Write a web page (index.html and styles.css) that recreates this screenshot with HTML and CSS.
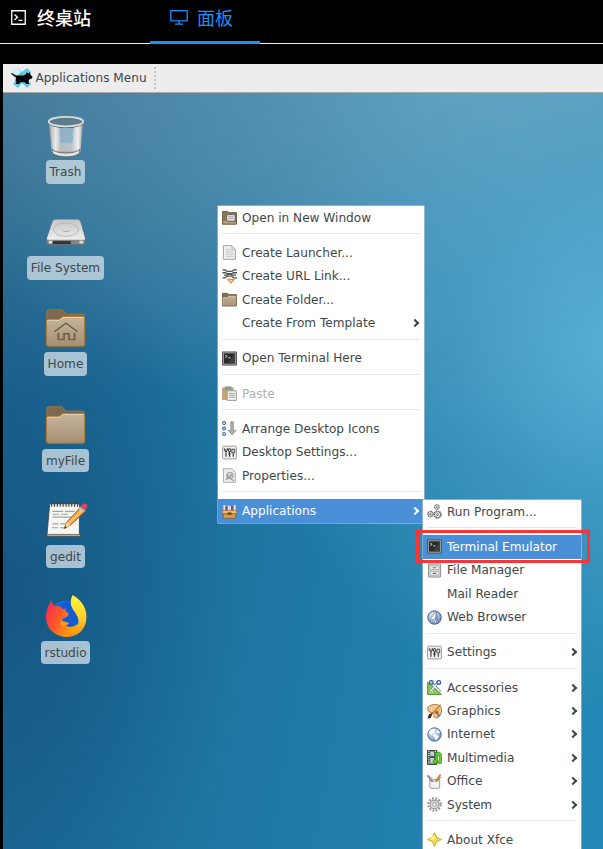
FILE: index.html
```html
<!DOCTYPE html>
<html lang="zh">
<head>
<meta charset="utf-8">
<title>面板</title>
<link rel="stylesheet" href="styles.css">
</head>
<body>
<svg class="defs" aria-hidden="true">
  <defs>
    <linearGradient id="tan" x1="0" y1="0" x2="0" y2="1"><stop offset="0" stop-color="#c5b59d"/><stop offset="1" stop-color="#a58f73"/></linearGradient>
    <linearGradient id="steel" x1="0" y1="0" x2="1" y2="0"><stop offset="0" stop-color="#8d9090"/><stop offset=".2" stop-color="#e4e6e6"/><stop offset=".35" stop-color="#9eaaae"/><stop offset=".65" stop-color="#a5b0b4"/><stop offset=".85" stop-color="#eeeeee"/><stop offset="1" stop-color="#85898a"/></linearGradient>
    <linearGradient id="drive" x1="0" y1="0" x2="0" y2="1"><stop offset="0" stop-color="#c4c4c4"/><stop offset="1" stop-color="#eeeeee"/></linearGradient>
    <linearGradient id="fire" x1="0" y1="0" x2="1" y2=".5"><stop offset="0" stop-color="#f4205c"/><stop offset=".45" stop-color="#ff552c"/><stop offset="1" stop-color="#ffb000"/></linearGradient>
    <linearGradient id="flame" x1="0" y1="0" x2="0" y2="1"><stop offset="0" stop-color="#fff23f"/><stop offset=".5" stop-color="#ffd52c"/><stop offset="1" stop-color="#ff8a12"/></linearGradient>
    <radialGradient id="orb" cx=".4" cy=".35" r=".7"><stop offset="0" stop-color="#f0f5fb"/><stop offset=".6" stop-color="#9fb5d4"/><stop offset="1" stop-color="#5878ab"/></radialGradient>
    <pattern id="mesh" width="2.4" height="2.4" patternUnits="userSpaceOnUse"><path d="M0 0h1.2v1.2H0zM1.2 1.2h1.2v1.2H1.2z" fill="#f5f8f8" opacity=".5"/></pattern>
    <pattern id="dither" width="2" height="2" patternUnits="userSpaceOnUse"><path d="M0 0h1v1H0zM1 1h1v1H1z" fill="#fff" opacity=".6"/></pattern>

    <symbol id="folder" viewBox="0 0 16 16"><path d="M.5 14V1.5h5.7l1.2 1.3h8.1V14z" fill="#86735a" stroke="#6d5a3d"/><path d="M.5 15V5.2h5L6.8 3.7h8.7V15z" fill="url(#tan)" stroke="#86683f" stroke-width=".9"/><path d="M1.3 14V6H6l1.3-1.5h7.3" fill="none" stroke="#dccdb5" stroke-width=".6"/></symbol>
    <symbol id="folder-open" viewBox="0 0 16 16"><path d="M.5 15V1.5h5.7l1.2 1.3h8.1V15z" fill="#8b7859" stroke="#6d5a3d"/><path d="M5 5h9v7H5z" fill="#f3f3f0" stroke="#5b5549" stroke-width=".9"/><path d="M6.5 7.2h6M6.5 9.2h6" stroke="#888" stroke-width=".9"/><path d="M.6 15V10.8H5l1 1.2h9.4v3z" fill="#b4a184" stroke="#6d5a3d" stroke-width=".8"/></symbol>
    <symbol id="page" viewBox="0 0 16 16"><path d="M1.5.7h9l3.8 4v10.6H1.5z" fill="#f3f3f2" stroke="#9b9b99"/><path d="M10.4 1v4h4" fill="#ddd" stroke="#aaa" stroke-width=".7"/><path d="M3.5 4.5h5.5M3.5 6.5h9M3.5 8.5h9M3.5 10.5h9M3.5 12.5h9" stroke="#bcbcba" stroke-width=".8"/></symbol>
    <symbol id="link" viewBox="0 0 16 16"><path d="M.5 1h3l2 1.6h5l2-1.6H16M.5 4H4l1.5 1h5L12 4h4M.5 9.5h3l2-2h5l2 2H16M2 6.6h3l1-1h4l1 1h4" fill="none" stroke="#50524f" stroke-width="1.4"/><path d="M4.6 10.4h9.8l-4.9 5.4z" fill="#f2883d"/><path d="M7.6 11.8h3.8l-1.9 2.1z" fill="#ffe1c9"/></symbol>
    <symbol id="terminal" viewBox="0 0 16 16"><path d="M.5 1h15v14H.5z" fill="#a9aba6" stroke="#4d4f4c"/><path d="M2 2.5h12v11H2z" fill="#272b29"/><path d="m3.5 4.5 2 1.2-2 1.2M6.5 7.3H9" fill="none" stroke="#eee" stroke-width=".9"/><path d="M14 2.5v11H6z" fill="#505552" opacity=".55"/></symbol>
    <symbol id="paste" viewBox="0 0 16 16"><path d="M0 1.5h12.5V15H0z" fill="#a97d40"/><path d="M3 .5h7v3.8H3z" fill="#666"/><path d="M5.5 5H15.5v10.5H5.5z" fill="#dededc" stroke="#777"/><path d="M7.5 8H14M7.5 10H14M7.5 12H14" stroke="#8c8c8c"/><path d="M0 0h16v16H0z" fill="url(#dither)"/></symbol>
    <symbol id="arrange" viewBox="0 0 16 16"><g fill="#fff" stroke="#3567ad" stroke-width="1.2"><circle cx="2.2" cy="2.2" r="1.5"/><circle cx="2.2" cy="8" r="1.5"/><circle cx="2.2" cy="13.8" r="1.5"/></g><path d="M9.3.7h2.9v9.2h3L10.8 15 6.2 9.9h3.1z" fill="#a9aca9" stroke="#8e918e" stroke-width=".7"/></symbol>
    <symbol id="sliders" viewBox="0 0 16 16"><rect x=".6" y="1.2" width="14.8" height="13.6" rx="1.5" fill="#eeeeec" stroke="#989a96"/><path d="M4.2 8v4.5M8 7v5.5M12 9v3.5" stroke="#333" stroke-width="1.2"/><path d="M2.5 3.5v2l1.7 2 1.7-2v-2M4.2 4v4" fill="none" stroke="#333"/><path d="M7 4h2v3H7zM10.5 4.5h3v4h-3z" fill="#ddd" stroke="#333" stroke-width=".9"/><path d="M6.5 9.6h3" stroke="#333"/></symbol>
    <symbol id="props" viewBox="0 0 16 16"><path d="M1.5.7h9l3.8 4v10.6H1.5z" fill="#eeeeec" stroke="#aaaaa7"/><circle cx="8.5" cy="8" r="3.6" fill="#d7d9d7" stroke="#949794"/><path d="M4 12.5l3-2.7M5 7l3 3 3-4M9 11l3.5 3" fill="none" stroke="#969996" stroke-width="1.3"/></symbol>
    <symbol id="apps" viewBox="0 0 16 16"><path d="M2.5 8V1M7 8V1.5M13.5 8V1" fill="none" stroke="#f1dfc9" stroke-width="2"/><path d="M4.8 3v5M10.6 2v6" stroke="#753a74" stroke-width="1.5"/><path d="M8.8 2v6" stroke="#fff" stroke-width="1.2"/><path d="M.3 7h15.4v3.5H.3z" fill="#efc078" stroke="#8d5920" stroke-width=".6"/><path d="M1.3 10.5h13.4v4.8H1.3z" fill="#d49a48" stroke="#7c4d17" stroke-width=".6"/><path d="M5.8 9h4.4v2.4H5.8z" fill="#71420f"/></symbol>
    <symbol id="run" viewBox="0 0 16 16"><g fill="#f4f4f3" stroke="#686a66"><circle cx="10.5" cy="3.3" r="2.4" stroke-width="1.4" stroke-dasharray="1.4 .5"/><circle cx="11.3" cy="11.3" r="3.5" stroke-width="1.8" stroke-dasharray="1.5 .5"/><circle cx="3.7" cy="10.7" r="2.8" stroke-width="1.5" stroke-dasharray="1.4 .5"/><circle cx="11.3" cy="11.3" r="1.1"/><circle cx="3.7" cy="10.7" r=".8"/><circle cx="10.5" cy="3.3" r=".5"/></g></symbol>
    <symbol id="cabinet" viewBox="0 0 16 16"><path d="M1.5 1h13v14h-13z" fill="#deded9" stroke="#8b8d89"/><path d="M3.2 3h9.6v4H3.2zM3.2 9h9.6v4H3.2z" fill="#f4f4f2" stroke="#9c9e99" stroke-width=".8"/><path d="M6 5h4M6 11h4" stroke="#6b6d69" stroke-width="1.2"/></symbol>
    <symbol id="compass" viewBox="0 0 16 16"><circle cx="8" cy="8" r="7.2" fill="url(#orb)" stroke="#3f5d91"/><path d="M9.5 1.5 2.5 11l4.5-1 1.5 4.5 3.5-2.5z" fill="#fbfcff" stroke="#617da8" stroke-width=".8"/><path d="M9.5 2 8 10l2 3 2-2z" fill="#8193ad"/></symbol>
    <symbol id="globe" viewBox="0 0 16 16"><circle cx="8" cy="8" r="7.2" fill="url(#orb)" stroke="#5272a7"/><path d="M2.5 4.5c2-3 4.5-3 6.5-2L8 5 6 6l-1 2-3-1zM6 8l4 0 3 2-2 3-2 1-1-3zM11 3l3 3-2 1-2-2z" fill="#f8fafc"/></symbol>
    <symbol id="scissors" viewBox="0 0 16 16"><path d="M.6 2.5v12.9H15.4z" fill="#83cf48" stroke="#489a26"/><path d="M3 9v4h4z" fill="#fff"/><path d="M4 2.5 14 12.5M12 2.5 3 12.5" stroke="#7e8990" stroke-width="3"/><path d="M4 3 13.5 12.3M12 3 3.5 12.3" stroke="#e9edef" stroke-width="1.5"/><circle cx="4.5" cy="2.6" r="2" fill="none" stroke="#3669ad" stroke-width="1.4"/><circle cx="12.5" cy="2.6" r="2" fill="none" stroke="#3669ad" stroke-width="1.4"/></symbol>
    <symbol id="palette" viewBox="0 0 16 16"><path d="M4 1.5c5-2.5 12-.5 11.5 5.5S12 16 8 14.5c-2-1 1-3.5-1-4.5S1 9 .8 6 2 2 4 1.5z" fill="#f3cc98" stroke="#ad6b27"/><circle cx="5" cy="4.8" r="1.6" fill="#fff" stroke="#b9752e" stroke-width=".6"/><circle cx="10.5" cy="9" r="1.7" fill="#e33625"/><circle cx="12.7" cy="6" r="1.3" fill="#e6be1e"/><circle cx="12.2" cy="12" r="1.5" fill="#4b86c4"/><path d="M14.5.8 5 11" stroke="#c6822f" stroke-width="1.6"/><path d="M6 9.5 4 15 .5 15.5 2 11z" fill="#31322d"/></symbol>
    <symbol id="media" viewBox="0 0 16 16"><path d="M.5.5h10v15H.5z" fill="#4a544e" stroke="#39423e"/><path d="M2 1v14M9 1v14" stroke="#fff" stroke-width="1.2" stroke-dasharray="1.2 1"/><path d="M3.5 1.5h4v5h-4zM3.5 8.5h4v6h-4z" fill="#bdd2dd"/><path d="M9 2.5h4.5l2.2 2v9.2c-2.6 2.2-5 .6-3.5-2.2l1-.6V6H11v7c-3 2.6-6 .6-4-2l2-.8z" fill="#5fd02c" stroke="#2e8c10" stroke-width=".8"/></symbol>
    <symbol id="office" viewBox="0 0 16 16"><path d="M3 6h10.5v8.7c-3 1.2-7.5 1.2-10.5 0z" fill="#e6e8e7" stroke="#999c9a"/><path d="M.8 1.5l5.7 7.5" stroke="#888b8b" stroke-width="2.2"/><path d="M4.5 3l4 6" stroke="#d0d3d3" stroke-width="1.4"/><path d="M14.5.5 9 8" stroke="#cf8b3a" stroke-width="2"/><path d="M14.8 3 10.5 8" stroke="#6c6f6f" stroke-width="1"/><path d="M4 8.5h8.5V14H4z" fill="#f1f2f1"/></symbol>
    <symbol id="gear" viewBox="0 0 16 16"><circle cx="8" cy="8" r="6.6" fill="none" stroke="#929492" stroke-width="2.2" stroke-dasharray="2 1.46"/><circle cx="8" cy="8" r="4.6" fill="#dedfdd" stroke="#a2a4a2" stroke-width="1.5"/><circle cx="8" cy="8" r="2" fill="#fff" stroke="#969896"/></symbol>
    <symbol id="star" viewBox="0 0 16 16"><path d="M8 .7 10.2 5.8 15.4 8 10.2 10.2 8 15.3 5.8 10.2.6 8l5.2-2.2z" fill="#f3dc55" stroke="#c6a414"/><path d="M8 3v5H3z" fill="#fff5a8"/></symbol>
  </defs>
</svg>

<nav class="tabs">
  <div class="tab tab-terminal">
    <svg class="tab-icon-term" viewBox="0 0 15 15"><path d="M.75.75h13.5v13.5H.75z" fill="none" stroke="#fff" stroke-width="1.3"/><path d="M3.5 4.5 6.5 7.2 3.5 10M7.5 10.4h4" fill="none" stroke="#fff" stroke-width="1.3"/></svg>
    <span>终桌站</span>
  </div>
  <div class="tab tab-panel">
    <svg class="tab-icon-panel" viewBox="0 0 18 15"><path d="M.8.7h16.4v10.2H.8zM9 11v3M5 14.2h8" fill="none" stroke="#1890ff" stroke-width="1.3"/></svg>
    <span>面板</span>
  </div>
</nav>

<main class="desktop">
  <header class="panel">
    <svg class="xfce" viewBox="0 0 22 22"><path d="m2 5 5-4 4 4 5-4 4 4-4 6 4 6-4 4-5-5-4 5-5-4 4-6z" fill="#62c6e8"/><path d="m2 5 5-4 3 4-4 4z" fill="#d4f1f9"/><path d="M0 6.3c2.2-.3 3.500 2.200 5.500 2.200h5c2 0 3.500-.5 4.500-1.500l.8-1.800 1.600 1.300 1.500-1.300.6 2.500 2 2-.6 1.700-2.900 1-.5 2.600 1 2h-3.500l-1-1.800H9.500L8 17H4.500l1-2-1-1.500.5-3C3 10 2 7.400 0 7z" fill="#050505"/></svg>
    <span class="panel-title">Applications Menu</span>
    <i class="grip"></i>
  </header>

  <section class="icons">
    <div class="launcher">
      <svg viewBox="0 0 48 48"><path d="M6 9h36l-3 32c-3 5-27 5-30 0z" fill="url(#steel)"/><path d="M17 14h15l-1 17H18z" fill="#5e97ba" opacity=".75"/><path d="M7.500 13h33l-3 24c-6 4-21 4-27 0z" fill="url(#mesh)"/><path d="M9.500 38c5 5 24 5 29 0l-.5 4c-5 5-23 5-28 0z" fill="#e4e4e4" stroke="#555" stroke-width=".8"/><ellipse cx="24" cy="9.500" rx="19" ry="5.700" fill="#5d7d8f" stroke="#444"/><ellipse cx="24" cy="9" rx="18" ry="5" fill="none" stroke="#d8dcdd" stroke-width="2"/></svg>
      <span class="label">Trash</span>
    </div>
    <div class="launcher">
      <svg viewBox="0 0 48 48"><path d="m4 31 6-18q.5-2 3-2h23q2 0 3 2l5 18v4q0 2-2 2H6q-2 0-2-2z" fill="#858585" stroke="#6a6a6a" stroke-width=".7"/><path d="m4 31 6-18q.5-2 3-2h23q2 0 3 2l5 18q0 1-2 1H6q-2 0-2-1z" fill="url(#drive)"/><ellipse cx="24" cy="21.500" rx="13" ry="7" fill="none" stroke="#b8b8b8"/><path d="M20 22c1 2 7 2 8 0" fill="none" stroke="#a5a5a5"/><path d="M6 33h4v3H6zM38 33h4v3h-4z" fill="#ddd"/><path d="M10 33.500h19v3H10z" fill="#333"/></svg>
      <span class="label">File System</span>
    </div>
    <div class="launcher">
      <svg viewBox="0 0 48 48"><path d="M4 40V7q0-2 2-2h14l4 4.500h17q2 0 2 2V40z" fill="#7d6850" stroke="#a27535"/><path d="M3.500 40V17q0-2 2-2H17l4-3h20.500q2 0 2 2v27q0 2-2 2h-36q-2 0-2-2z" fill="url(#tan)" stroke="#b17526"/><path d="M4.500 17q0-1 1-1H17l4-3h21" fill="none" stroke="#e8d6b8"/><path d="m12 28 12-9 12 9M16 29v7h6v-6h5v6h6v-7" fill="none" stroke="#725f48" stroke-width="1.800"/><path d="m13 29 11-8.500L35 29" fill="none" stroke="#d7c6aa" stroke-width=".6"/></svg>
      <span class="label">Home</span>
    </div>
    <div class="launcher">
      <svg viewBox="0 0 48 48"><path d="M4 40V7q0-2 2-2h14l4 4.500h17q2 0 2 2V40z" fill="#7d6850" stroke="#a27535"/><path d="M3.500 40V17q0-2 2-2H17l4-3h20.500q2 0 2 2v27q0 2-2 2h-36q-2 0-2-2z" fill="url(#tan)" stroke="#b17526"/><path d="M4.500 17q0-1 1-1H17l4-3h21" fill="none" stroke="#e8d6b8"/></svg>
      <span class="label">myFile</span>
    </div>
    <div class="launcher">
      <svg viewBox="0 0 48 48"><path d="M7 6h31v31l1 3H4z" fill="#f6f6f3" stroke="#444" stroke-width=".9"/><path d="M4 38h35v2H4z" fill="#bdbdb7" stroke="#444" stroke-width=".7"/><path d="M10 14h11M23 14h10M10 17h7M19 17h7M10 20h20M10 27h6M18 27h9M9 31h7M18 31h7" stroke="#a2a29e" stroke-width="1.200"/><path d="M9 4v5M12 4v5M15 4v5M18 4v5M21 4v5M24 4v5M27 4v5M30 4v5M33 4v5M36 4v5" stroke="#3b3b3b" stroke-width="1.200"/><path d="m22 32 3-7 15-16 5 4-16 15z" fill="#f49a36" stroke="#a85512"/><path d="m26 25 15-14 2 2-15 14z" fill="#ffc069"/><path d="m22 32 3-7 4 3z" fill="#f1d6a8"/><path d="m22 32 1.200-2.700 1.400 1.200z" fill="#222"/><path d="m38 10 4-4q2-1 4 1 1 2-1 4l-2 2z" fill="#de4655"/><path d="m36.500 11 2-2 5 4-2 2z" fill="#bcc3c8"/></svg>
      <span class="label">gedit</span>
    </div>
    <div class="launcher">
      <svg viewBox="0 0 48 48"><circle cx="24" cy="25" r="18" fill="#0878e2"/><path d="M16 12c6-6 16-6 20 2v16L24 38z" fill="#125bd3"/><path d="M9 6c0 4 2 6 4 7 3-1 6 0 8 3l3-1c-1 3 1 5 3 5-1 4-4 5-7 6 0 4 2 7 6 8 5 1 8-1 11-3l3 5c-8 14-35 11-37-11C3 18 6 11 9 6z" fill="url(#fire)"/><path d="M18 29c4-2 6 1 9 1-1 3-5 4-8 3z" fill="#ff9d21"/><path d="M31 1c10 6 16 15 14 27-2 13-14 19-25 16 11-1 18-8 17-17-1-7-8-11-8-18 0-4 1-6 2-8z" fill="url(#flame)"/></svg>
      <span class="label">rstudio</span>
    </div>
  </section>

  <ul class="menu menu-main">
    <li><svg><use href="#folder-open"/></svg><span>Open in New Window</span></li>
    <li class="sep"></li>
    <li><svg><use href="#page"/></svg><span>Create Launcher...</span></li>
    <li><svg><use href="#link"/></svg><span>Create URL Link...</span></li>
    <li><svg><use href="#folder"/></svg><span>Create Folder...</span></li>
    <li class="sub"><svg></svg><span>Create From Template</span></li>
    <li class="sep"></li>
    <li><svg><use href="#terminal"/></svg><span>Open Terminal Here</span></li>
    <li class="sep"></li>
    <li class="disabled"><svg><use href="#paste"/></svg><span>Paste</span></li>
    <li class="sep"></li>
    <li><svg><use href="#arrange"/></svg><span>Arrange Desktop Icons</span></li>
    <li><svg><use href="#sliders"/></svg><span>Desktop Settings...</span></li>
    <li><svg><use href="#props"/></svg><span>Properties...</span></li>
    <li class="sep"></li>
    <li class="sub active"><svg><use href="#apps"/></svg><span>Applications</span></li>
  </ul>

  <ul class="menu menu-apps">
    <li><svg><use href="#run"/></svg><span>Run Program...</span></li>
    <li class="sep"></li>
    <li class="active marked"><svg><use href="#terminal"/></svg><span>Terminal Emulator</span></li>
    <li><svg><use href="#cabinet"/></svg><span>File Manager</span></li>
    <li><svg></svg><span>Mail Reader</span></li>
    <li><svg><use href="#compass"/></svg><span>Web Browser</span></li>
    <li class="sep"></li>
    <li class="sub"><svg><use href="#sliders"/></svg><span>Settings</span></li>
    <li class="sep"></li>
    <li class="sub"><svg><use href="#scissors"/></svg><span>Accessories</span></li>
    <li class="sub"><svg><use href="#palette"/></svg><span>Graphics</span></li>
    <li class="sub"><svg><use href="#globe"/></svg><span>Internet</span></li>
    <li class="sub"><svg><use href="#media"/></svg><span>Multimedia</span></li>
    <li class="sub"><svg><use href="#office"/></svg><span>Office</span></li>
    <li class="sub"><svg><use href="#gear"/></svg><span>System</span></li>
    <li class="sep"></li>
    <li><svg><use href="#star"/></svg><span>About Xfce</span></li>
  </ul>
</main>
</body>
</html>
```
FILE: styles.css
```css
*, *::before, *::after { box-sizing: border-box; }
html, body { height: 100%; overflow: hidden; }
body {
  margin: 0;
  display: flex;
  flex-direction: column;
  background: #000;
  color: #3f474a;
  font: 12.12px/16px "DejaVu Sans", sans-serif;
}
svg { display: block; flex: none; }
.defs { position: absolute; width: 0; height: 0; }

.tabs {
  display: flex;
  height: 44px;
  flex: none;
  border-bottom: 1px solid #f0f0f0;
  font: 18px/34px "Noto Sans CJK SC", sans-serif;
  color: #fff;
}
.tab { display: flex; align-items: flex-start; height: 44px; }
.tab-terminal { width: 150px; padding-left: 11px; gap: 11px; font-weight: 500; }
.tab-panel { width: 110px; padding-left: 20px; gap: 9px; color: #1890ff; border-bottom: 3px solid #1890ff; }
.tab-icon-term { width: 15px; height: 15px; margin-top: 10px; }
.tab-icon-panel { width: 18px; height: 15px; margin-top: 10px; }

.desktop {
  position: relative;
  flex: 1;
  margin: 20px 0 0 3px;
  overflow: hidden;
  background:
    radial-gradient(ellipse 360px 380px at 103% 36%, rgba(91, 180, 217, .9), rgba(80, 165, 203, .55) 45%, rgba(70, 150, 190, 0) 100%),
    radial-gradient(ellipse 620px 400px at 85% 0, rgba(119, 171, 196, .85), rgba(100, 155, 182, 0) 100%),
    radial-gradient(ellipse 480px 340px at 0 0, rgba(85, 125, 150, .65), rgba(70, 120, 150, 0) 100%),
    radial-gradient(ellipse 240px 380px at 0 68%, rgba(20, 83, 127, .85), rgba(20, 88, 135, 0) 100%),
    linear-gradient(100deg, #1a638f 0%, #1f78a5 50%, #2388b6 100%);
}
.panel {
  display: flex;
  align-items: center;
  height: 29px;
  padding-left: 8px;
  background: #ededed;
  border-bottom: 1px solid #aaa9a7;
}
.xfce { width: 22px; height: 22px; }
.panel-title { margin: -1px 0 0 2.5px; }
.grip { width: 2px; height: 22px; margin-left: 7px; background: repeating-linear-gradient(#c6c6c6 0 2px, transparent 2px 4px); }

.icons { display: grid; grid-auto-rows: 96.2px; width: 125px; padding-top: 19px; }
.launcher { display: flex; flex-direction: column; align-items: center; }
.launcher svg { width: 48px; height: 48px; padding: 1px; }
.label {
  height: 23.5px;
  padding: 4px 3.8px;
  border-radius: 4px;
  background: rgba(199, 216, 226, .82);
  line-height: 17px;
}

.menu {
  position: absolute;
  margin: 0;
  padding: 0;
  list-style: none;
  background: #fff;
  box-shadow: 0 0 0 .5px #cfd6d9;
}
.menu-main { left: 215px; top: 142px; width: 206px; }
.menu-apps { left: 420px; top: 436px; width: 158px; }
.menu li {
  display: flex;
  align-items: center;
  gap: 5px;
  height: 23.4px;
  padding: 0 4px;
  white-space: nowrap;
}
.menu li svg { width: 15px; height: 15px; }
.menu .sep { height: 11.9px; padding: 0 4px; }
.menu .sep::before { content: ""; flex: 1; height: 1px; margin-bottom: 3px; background: #e6e8e8; }
.menu .disabled { color: #adb1b2; }
.menu .active { background: #4a90d9; color: #fff; }
.sub::after {
  content: "";
  width: 6px;
  height: 6px;
  margin: 0 1px 0 auto;
  border: solid currentColor;
  border-width: 2px 2px 0 0;
  transform: rotate(45deg);
}
.menu-main .sub::after { margin-right: 2px; }
.marked { position: relative; }
.marked::before {
  content: "";
  position: absolute;
  left: -7px;
  top: -5px;
  width: 174px;
  height: 33px;
  border: 3px solid #fb3535;
}
```
